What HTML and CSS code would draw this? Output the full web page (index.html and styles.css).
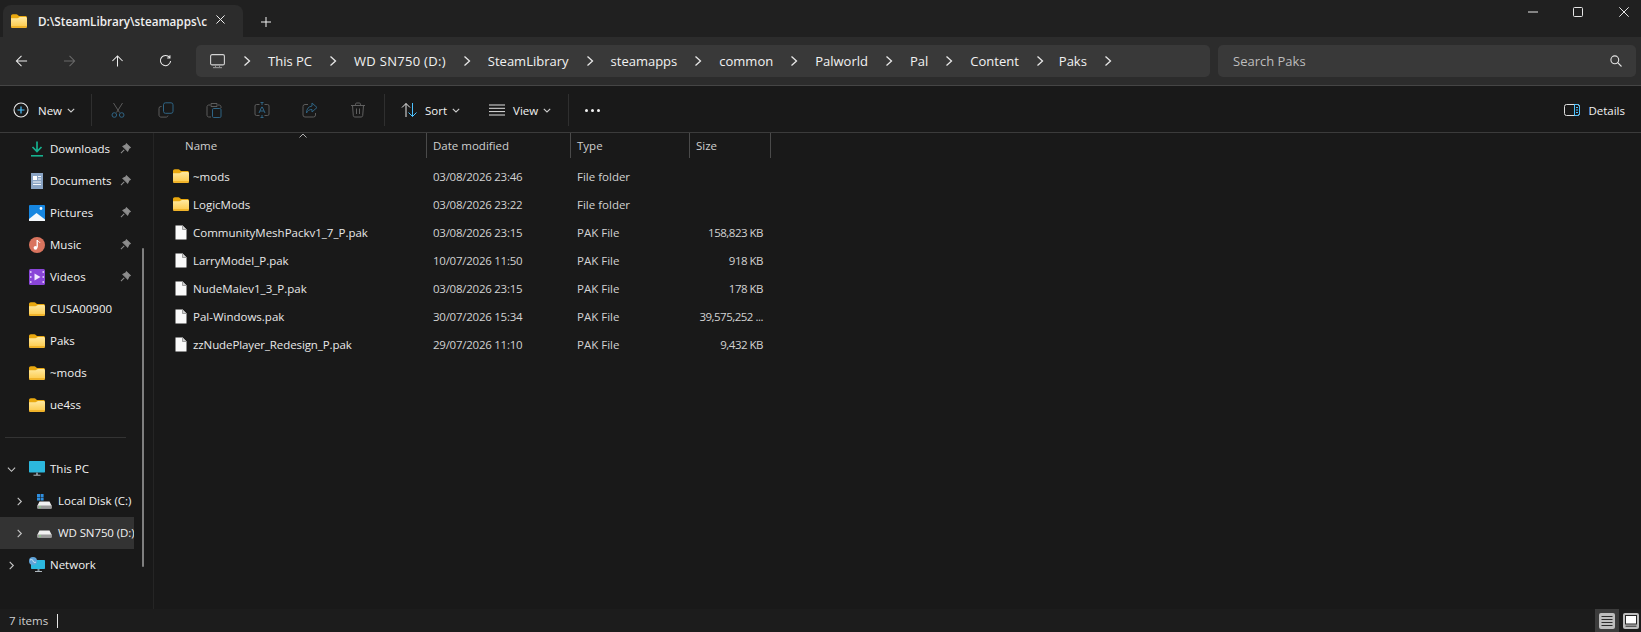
FILE: index.html
```html
<!DOCTYPE html>
<html lang="en">
<head>
<meta charset="utf-8">
<title>Paks - File Explorer</title>
<link rel="stylesheet" href="styles.css">
</head>
<body>
<svg class="defs" width="0" height="0" aria-hidden="true">
  <defs>
    <linearGradient id="fg" x1="0" y1="0" x2="0" y2="1"><stop offset="0" stop-color="#ffe9a0"/><stop offset="1" stop-color="#fcc845"/></linearGradient>
    <symbol id="folder" viewBox="0 0 16 14"><path d="M0 2.2C0 1 .8.3 1.8.3h3.6c.6 0 1 .2 1.4.6L8 2h6.3c1 0 1.7.7 1.7 1.7V5H0z" fill="#e9a80f"/><path d="M0 4.2h6.4c.6 0 1-.2 1.5-.6L9 3h5.3c1 0 1.7.7 1.7 1.7v7.6c0 1-.7 1.7-1.7 1.7H1.7C.7 14 0 13.300 0 12.300z" fill="url(#fg)"/><path d="M0 12.500c0 .9.700 1.500 1.700 1.500h12.600c1 0 1.700-.6 1.700-1.500v-.4H0z" fill="#f0b32a"/></symbol>
    <symbol id="file" viewBox="0 0 12 15"><path d="M.5 1.200C.5.800.8.500 1.200.500h6.300l4 4v9.300c0 .4-.3.700-.7.700H1.200c-.4 0-.7-.3-.7-.7z" fill="#fafafa" stroke="#8b8b8b"/><path d="M7.500.5v4h4" fill="#d0d0d0" stroke="#8b8b8b" stroke-width=".8"/></symbol>
    <symbol id="pin" viewBox="0 0 12 12"><path d="M7 .8 11.200 5 9.800 5.800 8.400 8.800 3.200 3.600 6.200 2.200zM4.600 7.400 1 11" fill="#8d8d8d" stroke="#8d8d8d" stroke-width="1.100"/></symbol>
    <symbol id="chev" viewBox="0 0 8 12"><path d="M1.500 1.500 6.500 6 1.500 10.500" fill="none" stroke="currentColor" stroke-width="1.300"/></symbol>
    <symbol id="caret" viewBox="0 0 8 5"><path d="M.8.800 4 4 7.200.800" fill="none" stroke="currentColor" stroke-width="1.100"/></symbol>
    <symbol id="drive" viewBox="0 0 15 8"><path d="M2.500.5h10L14.500 4.500v3H.5v-3z" fill="#f2f2f2"/><path d="M.5 4.500h14v3H.5z" fill="#9a9a9a"/><path d="M2 5.500h2v1H2z" fill="#7de07d"/></symbol>
  </defs>
</svg>

<div class="window">
  <header class="titlebar">
    <div class="tab">
      <svg class="tab-folder"><use href="#folder"/></svg>
      <span class="tab-title">D:\SteamLibrary\steamapps\c</span>
      <svg class="tab-close" viewBox="0 0 10 10"><path d="M.5.500l9 9M9.500.500l-9 9"/></svg>
    </div>
    <svg class="tab-add" viewBox="0 0 10 10"><path d="M5 0v10M0 5h10"/></svg>
    <div class="winctl">
      <svg class="win-min" viewBox="0 0 10 10"><path d="M0 5h10"/></svg>
      <svg class="win-max" viewBox="0 0 10 10"><rect x=".5" y=".5" width="9" height="9" rx="1"/></svg>
      <svg class="win-close" viewBox="0 0 10 10"><path d="M.3.300l9.400 9.400M9.700.300.300 9.700"/></svg>
    </div>
  </header>

  <nav class="navbar">
    <div class="navbtns">
      <svg class="nb" viewBox="0 0 14 14"><path d="M13 7H1.500M7 1.500 1.500 7 7 12.500"/></svg>
      <svg class="nb off" viewBox="0 0 14 14"><path d="M1 7h11.500M7 1.500 12.500 7 7 12.500"/></svg>
      <svg class="nb" viewBox="0 0 14 14"><path d="M7 13V1.500M1.500 7 7 1.500 12.500 7"/></svg>
      <svg class="nb" viewBox="0 0 14 14"><path d="M11.500 3.300A5.500 5.500 0 1 0 12.500 7M11.800 .8v3h-3"/></svg>
    </div>
    <div class="address">
      <svg class="pc" viewBox="0 0 15 15"><rect x=".6" y=".6" width="13.800" height="10.300" rx="1.500" fill="none" stroke="#d4d4d4" stroke-width="1.100"/><path d="M3 13h9v1.200H3z" fill="#8e8e8e"/><path d="M5 11h1v2H5zM9 11h1v2H9z" fill="#8e8e8e"/></svg>
      <svg class="ch"><use href="#chev"/></svg><span>This PC</span>
      <svg class="ch"><use href="#chev"/></svg><span class="wide">WD SN750 (D:)</span>
      <svg class="ch"><use href="#chev"/></svg><span>SteamLibrary</span>
      <svg class="ch"><use href="#chev"/></svg><span>steamapps</span>
      <svg class="ch"><use href="#chev"/></svg><span>common</span>
      <svg class="ch"><use href="#chev"/></svg><span>Palworld</span>
      <svg class="ch"><use href="#chev"/></svg><span>Pal</span>
      <svg class="ch"><use href="#chev"/></svg><span>Content</span>
      <svg class="ch"><use href="#chev"/></svg><span class="narrow">Paks</span>
      <svg class="ch"><use href="#chev"/></svg>
    </div>
    <div class="search">
      <span>Search Paks</span>
      <svg viewBox="0 0 12 12"><circle cx="4.800" cy="4.800" r="3.900"/><path d="M7.700 7.700 11.500 11.500"/></svg>
    </div>
  </nav>

  <div class="toolbar">
    <div class="tb-new">
      <svg class="plus" viewBox="0 0 16 16"><circle cx="8" cy="8" r="7" fill="none" stroke="#e8e8e8" stroke-width="1.100"/><path d="M8 4.500v7M4.500 8h7" stroke="#4cc2ff" stroke-width="1.200"/></svg>
      <span>New</span>
      <svg class="cr"><use href="#caret"/></svg>
    </div>
    <i class="sep"></i>
    <div class="tb-icons">
      <svg viewBox="0 0 16 16"><path d="M3.500 1 9.500 10.500M12.500 1 6.500 10.500" stroke="#5c5c5c"/><circle cx="4.300" cy="13" r="2.300" stroke="#2f6484"/><circle cx="11.700" cy="13" r="2.300" stroke="#2f6484"/></svg>
      <svg viewBox="0 0 16 16"><rect x="5.500" y=".8" width="9.500" height="10.500" rx="2" stroke="#2f6484"/><path d="M3.500 4.500h-.6A1.900 1.900 0 0 0 1 6.400v6.700c0 1.100.9 2 2 2h5.200c.9 0 1.700-.7 1.800-1.500" stroke="#5c5c5c"/></svg>
      <svg viewBox="0 0 16 16"><path d="M4 3H2.800C1.800 3 1 3.800 1 4.800v8.400C1 14.200 1.800 15 2.800 15H5M12 3h1.200c1 0 1.800.8 1.800 1.800V6M5 1.500h6V4.500H5z" stroke="#5c5c5c"/><rect x="6.500" y="6.500" width="8.500" height="9" rx="1.200" stroke="#2f6484"/></svg>
      <svg viewBox="0 0 16 16"><path d="M5.500 2.500h-3A1.500 1.500 0 0 0 1 4v8a1.500 1.500 0 0 0 1.500 1.500h3M10.500 2.500h3A1.500 1.500 0 0 1 15 4v8a1.500 1.500 0 0 1-1.500 1.500h-3" stroke="#5c5c5c"/><path d="M8 .5v2.500M8 13v2.500M6.500 .5h3M6.500 15.500h3M5 11 7.700 5h.6L11 11M6 9h4" stroke="#2f6484"/></svg>
      <svg viewBox="0 0 16 16"><path d="M6 2.500H3A2 2 0 0 0 1 4.500v8.500a2 2 0 0 0 2 2h8.500a2 2 0 0 0 2-2v-2" stroke="#5c5c5c"/><path d="M10 1 15 5.500 10 10V7.500C7.500 7.500 5.500 8.500 4.500 11c0-4 2-6.500 5.500-7z" stroke="#2f6484"/></svg>
      <svg viewBox="0 0 16 16"><path d="M1 3.500h14M5.500 3.500V2.200C5.500 1.500 6 1 6.700 1h2.600c.7 0 1.200.5 1.200 1.200v1.300M2.500 3.500l.8 10.200c.1.800.7 1.300 1.500 1.300h6.400c.8 0 1.400-.5 1.500-1.300l.8-10.200M6.500 6.500v5.500M9.500 6.500v5.500" stroke="#606060"/></svg>
    </div>
    <i class="sep"></i>
    <div class="tb-sort">
      <svg viewBox="0 0 16 16"><path d="M5 15V1.500M1 5.500l4-4 4 4" stroke="#e8e8e8"/><path d="M11.500 1v13.500M7.500 10.500l4 4 4-4" stroke="#4cc2ff"/></svg>
      <span>Sort</span>
      <svg class="cr"><use href="#caret"/></svg>
    </div>
    <div class="tb-view">
      <svg viewBox="0 0 16 12"><path d="M0 1h16M0 4.300h16M0 7.600h16M0 11h16" stroke="#e0e0e0"/></svg>
      <span>View</span>
      <svg class="cr"><use href="#caret"/></svg>
    </div>
    <i class="sep sep-last"></i>
    <div class="more"><b></b><b></b><b></b></div>
    <div class="tb-details">
      <svg viewBox="0 0 16 12"><rect x=".5" y=".5" width="15" height="11" rx="2" stroke="#dedede"/><path d="M10.500.5h3a2 2 0 0 1 2 2v7a2 2 0 0 1-2 2h-3z" stroke="#4cc2ff"/><path d="M12 3.500h2M12 6h2M12 8.500h2" stroke="#4cc2ff"/></svg>
      <span>Details</span>
    </div>
  </div>

  <div class="main">
    <aside class="sidebar">
      <ul class="tree">
        <li class="it">
          <svg class="ico" viewBox="0 0 16 16"><path d="M8 .5v9.500M3.500 6 8 10.500 12.500 6" fill="none" stroke="#16b08e" stroke-width="1.700"/><path d="M2 14h12v1.600H2z" fill="#16b08e"/></svg>
          <span>Downloads</span><svg class="pin"><use href="#pin"/></svg>
        </li>
        <li class="it">
          <svg class="ico" viewBox="0 0 16 16"><rect x="2" y="0" width="12" height="16" fill="#8aa4c4"/><path d="M4 3h4v4H4z" fill="#fff"/><path d="M9 3h3v1H9zM9 5.500h3v1H9zM4 8.500h8v1H4zM4 11h8v1H4z" fill="#f4f7fb"/></svg>
          <span>Documents</span><svg class="pin"><use href="#pin"/></svg>
        </li>
        <li class="it">
          <svg class="ico" viewBox="0 0 16 16"><rect width="16" height="16" rx="1" fill="#1686e0"/><path d="M0 16V14L7.500 8l8.500 6.500V16z" fill="#f4f8fc"/><circle cx="12" cy="3.500" r="1.400" fill="#fff"/></svg>
          <span>Pictures</span><svg class="pin"><use href="#pin"/></svg>
        </li>
        <li class="it">
          <svg class="ico" viewBox="0 0 16 16"><circle cx="8" cy="8" r="8" fill="#d9745e"/><path d="M8.200 3v7.500" stroke="#fff" stroke-width="1.300"/><path d="M8.200 3c.5 1.500 2.300 1.600 2.800 2.800" stroke="#fff" fill="none"/><circle cx="6.500" cy="10.800" r="1.900" fill="#fff"/></svg>
          <span>Music</span><svg class="pin"><use href="#pin"/></svg>
        </li>
        <li class="it">
          <svg class="ico" viewBox="0 0 16 16"><rect width="16" height="16" rx="1.500" fill="#8a45d8"/><path d="M5.500 4.500v7L11.500 8z" fill="#f2e8ff"/><path d="M1 2h1.500v2H1zM1 7h1.500v2H1zM1 12h1.500v2H1zM13.500 2H15v2h-1.500zM13.500 7H15v2h-1.500zM13.500 12H15v2h-1.500z" fill="#d8bcf5"/></svg>
          <span>Videos</span><svg class="pin"><use href="#pin"/></svg>
        </li>
        <li class="it"><svg class="ico fld"><use href="#folder"/></svg><span>CUSA00900</span></li>
        <li class="it"><svg class="ico fld"><use href="#folder"/></svg><span>Paks</span></li>
        <li class="it"><svg class="ico fld"><use href="#folder"/></svg><span>~mods</span></li>
        <li class="it"><svg class="ico fld"><use href="#folder"/></svg><span>ue4ss</span></li>
      </ul>
      <hr class="rule">
      <ul class="tree">
        <li class="it has">
          <svg class="tw" viewBox="0 0 10 10"><path d="M1 3l4 4 4-4"/></svg>
          <svg class="ico" viewBox="0 0 16 16"><rect x="0" y="0" width="16" height="11.500" rx=".7" fill="#2cb8de"/><path d="M7 11.500h2V14H7z" fill="#7a8a96"/><path d="M4.500 13.700h7v1H4.500z" fill="#b0b8be"/></svg>
          <span>This PC</span>
        </li>
        <li class="it sub has">
          <svg class="tw" viewBox="0 0 10 10"><path d="M3 1l4 4-4 4"/></svg>
          <svg class="ico dv" viewBox="0 0 15 15"><path d="M0 0h3v3H0zM3.600 0h3v3h-3zM0 3.600h3v3H0zM3.600 3.600h3v3h-3z" fill="#2f8fe0"/><use href="#drive" width="15" height="8" y="7"/></svg>
          <span>Local Disk (C:)</span>
        </li>
        <li class="it sub has sel">
          <svg class="tw" viewBox="0 0 10 10"><path d="M3 1l4 4-4 4"/></svg>
          <svg class="ico dv" viewBox="0 0 15 15"><use href="#drive" width="15" height="8" y="4"/></svg>
          <span class="tight">WD SN750 (D:)</span>
        </li>
        <li class="it has">
          <svg class="tw" viewBox="0 0 10 10"><path d="M3 1l4 4-4 4"/></svg>
          <svg class="ico" viewBox="0 0 16 16"><rect x="2" y="3" width="14" height="9" rx=".7" fill="#2cb8de"/><path d="M8.500 12h2v2h-2z" fill="#7a8a96"/><path d="M6 14h7v1H6z" fill="#b0b8be"/><circle cx="4" cy="4" r="4" fill="#5fa3d8"/><path d="M1 3c2-1 3 0 3 1s2 2 3 1" stroke="#cfe6f6" fill="none"/></svg>
          <span>Network</span>
        </li>
      </ul>
      <div class="scrollbar"></div>
    </aside>

    <section class="list">
      <div class="head">
        <div class="hc hname">Name<svg class="sortup" viewBox="0 0 8 5"><path d="M.5 4.500 4 1l3.500 3.500"/></svg></div>
        <div class="hc">Date modified</div>
        <div class="hc">Type</div>
        <div class="hc">Size</div>
      </div>
      <div class="row"><div class="name"><svg class="ri"><use href="#folder"/></svg>~mods</div><div class="dt">03/08/2026 23:46</div><div>File folder</div><div class="sz"></div></div>
      <div class="row"><div class="name"><svg class="ri"><use href="#folder"/></svg>LogicMods</div><div class="dt">03/08/2026 23:22</div><div>File folder</div><div class="sz"></div></div>
      <div class="row"><div class="name"><svg class="ri rf"><use href="#file"/></svg>CommunityMeshPackv1_7_P.pak</div><div class="dt">03/08/2026 23:15</div><div>PAK File</div><div class="sz">158,823 KB</div></div>
      <div class="row"><div class="name"><svg class="ri rf"><use href="#file"/></svg>LarryModel_P.pak</div><div class="dt">10/07/2026 11:50</div><div>PAK File</div><div class="sz">918 KB</div></div>
      <div class="row"><div class="name"><svg class="ri rf"><use href="#file"/></svg>NudeMalev1_3_P.pak</div><div class="dt">03/08/2026 23:15</div><div>PAK File</div><div class="sz">178 KB</div></div>
      <div class="row"><div class="name"><svg class="ri rf"><use href="#file"/></svg>Pal-Windows.pak</div><div class="dt">30/07/2026 15:34</div><div>PAK File</div><div class="sz">39,575,252 ...</div></div>
      <div class="row"><div class="name"><svg class="ri rf"><use href="#file"/></svg><span class="zz">zzNudePlayer_Redesign_P.pak</span></div><div class="dt">29/07/2026 11:10</div><div>PAK File</div><div class="sz">9,432 KB</div></div>
    </section>
  </div>

  <footer class="status">
    <span class="count">7 items</span>
    <i class="cursor"></i>
    <div class="views">
      <div class="vbtn on"><svg viewBox="0 0 16 16"><rect width="16" height="16" rx="2" fill="#bdbdbd"/><path d="M2.500 3.500h11M2.500 6.500h11M2.500 9.500h11M2.500 12.500h11" stroke="#2a2a2a" stroke-width="1.200"/></svg></div>
      <div class="vbtn"><svg viewBox="0 0 16 16"><rect width="16" height="16" rx="2" fill="#bdbdbd"/><rect x="2.500" y="2.500" width="11" height="8.500" fill="#fff" stroke="#222"/><path d="M2.500 13.200h11" stroke="#2a2a2a"/></svg></div>
    </div>
  </footer>
</div>
</body>
</html>
```
FILE: styles.css
```css
* { box-sizing: border-box; }
html, body { margin: 0; padding: 0; height: 100%; overflow: hidden; background: #191919; }
body { font-family: "Open Sans", "Noto Sans", "Liberation Sans", sans-serif; color: #fff; }
ul { list-style: none; margin: 0; padding: 0; }
svg { display: block; flex: none; }
.defs { position: absolute; }
.window { display: flex; flex-direction: column; height: 632px; width: 1641px; }

/* Title bar */
.titlebar { height: 37px; background: #202020; display: flex; align-items: flex-end; padding-left: 3px; }
.tab { width: 240px; height: 32px; background: #2c2c2c; border-radius: 8px 8px 0 0; display: flex; align-items: center; padding-left: 8px; }
.tab-folder { width: 16px; height: 14px; margin-top: -1px; }
.tab-title { width: 163px; margin-left: 11px; white-space: nowrap; font-size: 11.700px; font-weight: 600; color: #f0f0f0; margin-top: -1px; }
.tab-close { width: 9px; height: 9px; margin-left: 15px; margin-top: -3px; fill: none; stroke: #f2f2f2; stroke-width: 1.1; }
.tab-add { width: 10px; height: 10px; margin-left: 18px; margin-bottom: 10px; fill: none; stroke: #f2f2f2; stroke-width: 1; }
.winctl { margin-left: auto; align-self: flex-start; display: flex; align-items: center; padding: 7px 12px 0 0; }
.winctl svg { width: 10px; height: 10px; fill: none; stroke: #e6e6e6; stroke-width: 1; }
.win-min { margin-right: 35px; }
.win-max { margin-right: 36px; }

/* Nav */
.navbar { height: 49px; background: #2c2c2c; border-bottom: 1px solid #454545; display: flex; align-items: flex-start; padding-top: 8px; padding-left: 15px; }
.navbtns { width: 181px; display: flex; gap: 35px; padding-top: 9px; }
.nb { width: 13px; height: 14px; fill: none; stroke: #ededed; stroke-width: 1.1; }
.nb.off { stroke: #6a6a6a; }
.address { width: 1014px; height: 32px; background: #393939; border-radius: 5px; display: flex; align-items: center; font-size: 13px; color: #f2f2f2; padding-left: 14px; }
.address span, .search span { margin-top: -1px; }
.pc { width: 15px; height: 15px; margin-right: 18px; }
.ch { width: 8px; height: 12px; color: #e8e8e8; margin: 0 17px; }
.address .pc + .ch { margin-left: 0; }
.wide { letter-spacing: .3px; }
.address .narrow { margin-left: -2px; }
.search { width: 418px; height: 32px; margin-left: 8px; background: #393939; border-radius: 5px; display: flex; align-items: center; justify-content: space-between; padding: 0 14px 0 15px; font-size: 13px; color: #bdbdbd; }
.search svg { width: 12px; height: 12px; fill: none; stroke: #e4e4e4; stroke-width: 1.1; }

/* Toolbar */
.toolbar { height: 47px; background: #191919; border-bottom: 1px solid #3b3b3b; display: flex; align-items: center; font-size: 11.500px; font-weight: 500; color: #f2f2f2; padding: 2px 0 0 13px; }
.toolbar span { display: block; }
.tb-new, .tb-sort, .tb-view, .tb-details { display: flex; align-items: center; }
.tb-new span { margin-left: 9px; }
.cr { width: 8px; height: 5px; color: #cfcfcf; margin-left: 5px; }
.plus { width: 16px; height: 16px; }
.sep { width: 1px; height: 32px; background: #2f2f2f; display: block; }
.tb-new + .sep { margin-left: 16px; }
.tb-icons { display: flex; gap: 32px; margin-left: 18px; }
.tb-icons svg, .tb-sort svg:first-child { width: 16px; height: 16px; fill: none; stroke-width: 1; }
.tb-icons + .sep { margin-left: 18px; }
.tb-sort { margin-left: 16px; }
.tb-sort span { margin-left: 8px; }
.tb-view { margin-left: 29px; }
.tb-view svg:first-child { width: 16px; height: 12px; fill: none; }
.tb-view span { margin-left: 8px; }
.sep-last { margin-left: 17px; }
.more { margin-left: 16px; display: flex; gap: 3px; }
.more b { width: 3px; height: 3px; border-radius: 50%; background: #f2f2f2; display: block; }
.tb-details { margin-left: auto; padding-right: 16px; }
.tb-details svg { width: 16px; height: 12px; fill: none; }
.tb-details span { margin-left: 8px; }

/* Main */
.main { flex: 1; min-height: 0; display: flex; }
.sidebar { position: relative; width: 154px; border-right: 1px solid #252525; flex: none; overflow: hidden; font-size: 11.500px; color: #f2f2f2; }
.it { width: 134px; height: 32px; display: flex; align-items: center; padding-left: 29px; white-space: nowrap; overflow: hidden; position: relative; }
.ico { width: 16px; height: 16px; }
.ico.fld { height: 14px; }
.it > span { margin-left: 5px; margin-top: -2px; }
.pin { position: absolute; left: 120px; top: 10px; width: 11px; height: 11px; }
.it.has { padding-left: 7px; }
.tw { width: 9px; height: 9px; margin-right: 13px; fill: none; stroke: #c8c8c8; stroke-width: 1.200; }
.it.sub { padding-left: 15px; }
.sub .ico { width: 15px; height: 15px; }
.sub > span { margin-left: 6px; }
.tight { letter-spacing: -.1px; }
.sel { background: #333; }
.rule { margin: 16px 15px 15px 5px; border: 0; height: 1px; background: #333; width: 121px; }
.scrollbar { position: absolute; left: 141.500px; top: 115px; width: 2.500px; height: 319px; background: #7f7f7f; border-radius: 2px; }

/* List */
.list { flex: 1; min-width: 0; font-size: 11.500px; color: #d2d2d2; }
.head, .row { display: grid; grid-template-columns: 273px 144px 119px 81px; }
.head { height: 25px; margin-bottom: 4px; color: #cfcfcf; }
.hc { border-right: 1px solid #4a4a4a; padding-left: 6px; line-height: 25px; position: relative; }
.hname { padding-left: 31px; }
.sortup { position: absolute; left: 145px; top: 0; width: 8px; height: 5px; fill: none; stroke: #b0b0b0; }
.row { height: 28px; align-items: center; }
.row > div { padding-left: 6px; white-space: nowrap; }
.row .name { padding-left: 19px; color: #e8e8e8; display: flex; align-items: center; }
.row .dt { letter-spacing: -.25px; }
.zz { letter-spacing: -.1px; }
.ri { width: 16px; height: 14px; margin-right: 4px; }
.ri.rf { width: 12px; height: 15px; margin-left: 2px; margin-right: 6px; }
.row .sz { text-align: right; padding-right: 8px; padding-left: 0; letter-spacing: -.5px; }

/* Status */
.status { height: 23px; background: #1c1c1c; display: flex; align-items: center; font-size: 11.500px; color: #cfcfcf; padding-left: 9px; }
.cursor { width: 1px; height: 14px; background: #e6e6e6; margin-left: 9px; display: block; }
.views { margin-left: auto; display: flex; height: 100%; }
.vbtn { width: 22px; height: 23px; display: flex; align-items: center; justify-content: flex-end; padding-right: 2px; }
.vbtn.on { width: 24px; background: #3c3c3c; padding-right: 4px; }
.vbtn svg { width: 16px; height: 16px; }
```
